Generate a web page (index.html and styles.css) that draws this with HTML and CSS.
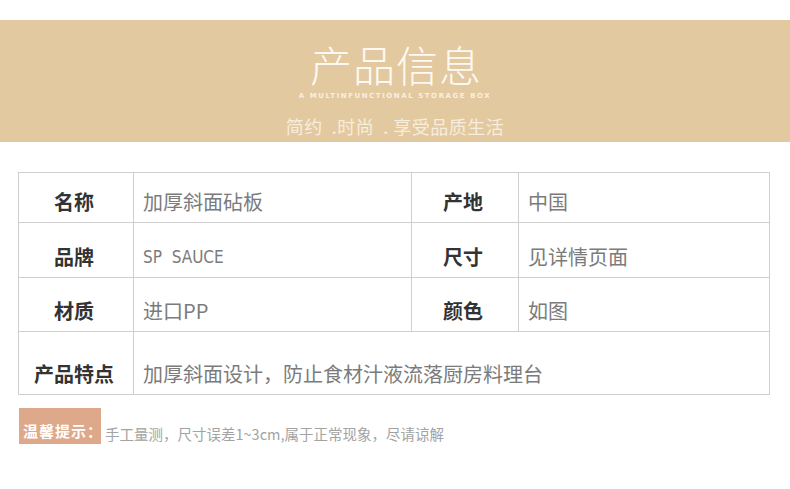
FILE: index.html
```html
<!DOCTYPE html>
<html lang="zh">
<head>
<meta charset="utf-8">
<link rel="stylesheet" href="styles.css">
</head>
<body>
<header class="banner">
  <h1 class="title">产品信息</h1>
  <p class="subtitle">A MULTINFUNCTIONAL STORAGE BOX</p>
  <p class="tagline">简约&nbsp;&nbsp;.时尚&nbsp;&nbsp;.&nbsp;享受品质生活</p>
</header>
<section class="specs">
  <div class="cell label">名称</div>
  <div class="cell value">加厚斜面砧板</div>
  <div class="cell label">产地</div>
  <div class="cell value">中国</div>

  <div class="cell label">品牌</div>
  <div class="cell value latin">SP&nbsp;&nbsp;SAUCE</div>
  <div class="cell label">尺寸</div>
  <div class="cell value">见详情页面</div>

  <div class="cell label">材质</div>
  <div class="cell value">进口PP</div>
  <div class="cell label">颜色</div>
  <div class="cell value">如图</div>

  <div class="cell label">产品特点</div>
  <div class="cell value wide">加厚斜面设计，防止食材汁液流落厨房料理台</div>
</section>
<div class="tip">
  <span class="tip-badge">温馨提示：</span>
  <span class="tip-text">手工量测，尺寸误差1~3cm,属于正常现象，尽请谅解</span>
</div>
</body>
</html>
```
FILE: styles.css
```css
* { box-sizing: border-box; }
html, body { margin: 0; padding: 0; background: #fff; }
body {
  padding-top: 20px;
  font-family: "Noto Sans CJK SC", "Noto Sans", sans-serif;
  width: 790px;
}
.banner {
  height: 122px;
  background: #e3c9a0;
  display: flex;
  flex-direction: column;
  align-items: center;
  padding-top: 22px;
  color: #fdf9f2;
}
.title {
  margin: 0;
  font-size: 42px;
  line-height: 44px;
  font-weight: 300;
  letter-spacing: 1px;
  padding-left: 2px;
}
.subtitle {
  margin: 6px 0 0;
  font-family: "DejaVu Sans", sans-serif;
  font-size: 7px;
  line-height: 8px;
  font-weight: bold;
  letter-spacing: 1.55px;
  color: #f8efe0;
}
.tagline {
  margin: 17px 0 0;
  font-size: 18px;
  line-height: 18px;
  font-weight: 400;
  color: #f7eddd;
  letter-spacing: 0.5px;
}
.specs {
  margin: 30px 0 0 18px;
  width: 752px;
  display: grid;
  grid-template-columns: 114px 277px 106px 250px;
  grid-template-rows: 49px 54px 53px 62px;
  gap: 1px;
  padding: 1px;
  background: #cfcfcf;
}
.cell {
  background: #fff;
  display: flex;
  align-items: flex-end;
  padding-bottom: 9px;
  font-size: 20px;
  line-height: 22px;
}
.label {
  justify-content: center;
  padding-right: 4px;
  font-weight: 700;
  color: #333;
}
.value {
  padding-left: 9px;
  color: #7b7b7b;
}
.latin {
  font-family: "Liberation Sans Narrow", "DejaVu Sans Condensed", sans-serif;
  font-stretch: condensed;
  font-size: 17px;
}
.wide { grid-column: 2 / 5; }
.tip {
  margin: 13px 0 0 19px;
  display: flex;
  align-items: center;
}
.tip-badge {
  width: 82px;
  height: 36px;
  background: #dda98a;
  color: #fff;
  font-size: 15px;
  font-weight: 700;
  letter-spacing: 1px;
  display: flex;
  align-items: center;
  padding: 8px 0 0 4px;
  white-space: nowrap;
}
.tip-text {
  margin-left: 4px;
  padding-top: 14px;
  font-size: 14.5px;
  color: #a3a3a3;
  white-space: nowrap;
}
```
